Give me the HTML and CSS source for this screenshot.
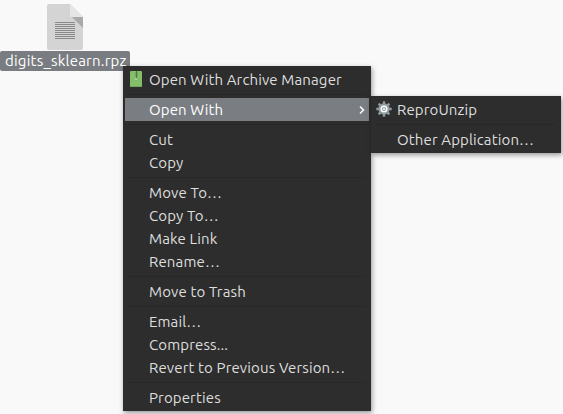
FILE: index.html
```html
<!DOCTYPE html>
<html lang="en">
<head>
<meta charset="utf-8">
<title>Files</title>
<link rel="stylesheet" href="styles.css">
</head>
<body>
<div class="file">
  <svg class="file-icon" width="36" height="46" viewBox="0 0 36 46">
    <path d="M2 0H23L36 13V44Q36 46 34 46H2Q0 46 0 44V2Q0 0 2 0Z" fill="#d4d4d4"/>
    <path d="M23 13H36V24L25 13Z" fill="#aaa"/>
    <path d="M23 0L36 13H25Q23 13 23 11Z" fill="#e6e6e6"/>
    <path d="M8 18.5H28M8 20.5H28M8 22.5H28M8 24.5H28M8 26.5H28M8 28.5H28M8 30.5H28M8 32.5H28M8 34.5H28" stroke="#8a8a8a"/>
  </svg>
  <span class="file-name">digits_sklearn.rpz</span>
</div>
<ul class="menu context">
  <li class="item">
    <svg class="icon" width="12" height="16" viewBox="0 0 12 16"><rect width="12" height="16" rx="1" fill="#83bf69"/><path d="M0.5 15.5H11.5" stroke="#74ad5c"/><path d="M5.5 1V6M7.5 1V6" stroke="#6fa35b" stroke-width="0.8"/><path d="M6.5 0V7" stroke="#56734c"/><path d="M5.5 7.5H6.5V9H5.5Z" fill="#d6edcc"/></svg>
    <span>Open With Archive Manager</span></li>
  <li class="separator"></li>
  <li class="item active"><span>Open With</span>
    <svg class="arrow" width="6" height="10" viewBox="0 0 6 10"><path d="M1 1.5L4.5 5L1 8.5" fill="none" stroke="#fff" stroke-width="1.5"/></svg></li>
  <li class="separator"></li>
  <li class="item"><span>Cut</span></li>
  <li class="item"><span>Copy</span></li>
  <li class="separator"></li>
  <li class="item"><span>Move To…</span></li>
  <li class="item"><span>Copy To…</span></li>
  <li class="item"><span>Make Link</span></li>
  <li class="item"><span>Rename…</span></li>
  <li class="separator"></li>
  <li class="item"><span>Move to Trash</span></li>
  <li class="separator"></li>
  <li class="item"><span>Email…</span></li>
  <li class="item"><span>Compress...</span></li>
  <li class="item"><span>Revert to Previous Version…</span></li>
  <li class="separator"></li>
  <li class="item"><span>Properties</span></li>
</ul>
<ul class="menu submenu">
  <li class="item">
    <svg class="icon gear" width="16" height="16" viewBox="0 0 16 16"><path d="M8 0.3V15.7M0.3 8H15.7M2.6 2.6L13.4 13.4M13.4 2.6L2.6 13.4" stroke="#8f9b9f" stroke-width="2.4"/><circle cx="8" cy="8" r="5.7" fill="#8f9b9f"/><circle cx="8" cy="8" r="2.8" fill="#8f9b9f" stroke="#fff" stroke-width="1.5"/><circle cx="8" cy="8" r="1" fill="#fff"/></svg>
    <span>ReproUnzip</span></li>
  <li class="separator"></li>
  <li class="item"><span>Other Application…</span></li>
</ul>
</body>
</html>
```
FILE: styles.css
```css
body {
  margin: 0;
  width: 563px;
  height: 414px;
  overflow: hidden;
  position: relative;
  background: #f9f9f9;
  font: 15px/23px Ubuntu, "Noto Sans", sans-serif;
  letter-spacing: 0.13px;
  color: #dedede;
}
.file {
  width: 130px;
  padding-top: 4px;
  display: flex;
  flex-direction: column;
  align-items: center;
}
.file-icon { display: block; margin-bottom: 1px; }
.file-name {
  box-sizing: border-box;
  width: 130px;
  height: 20px;
  padding-left: 5px;
  line-height: 20px;
  letter-spacing: 0.22px;
  border-radius: 2px;
  background: #797c80;
  color: #fff;
  white-space: nowrap;
}
.menu {
  position: absolute;
  box-sizing: border-box;
  margin: 0;
  padding: 2px;
  list-style: none;
  background: #2d2d2d;
  box-shadow: 1px 2px 5px rgba(0, 0, 0, 0.4);
}
.context { left: 123px; top: 66px; width: 248px; }
.submenu { left: 371px; top: 96px; width: 190px; }
.item {
  position: relative;
  display: flex;
  align-items: center;
  height: 23px;
  padding: 0 4px 0 24px;
  white-space: nowrap;
}
.active { background: #7a7d81; color: #fff; }
.separator {
  height: 1px;
  margin: 3px;
  background: #282828;
}
.icon { position: absolute; left: 5px; top: 3px; }
.gear { left: 3px; }
.arrow { margin-left: auto; }
```
